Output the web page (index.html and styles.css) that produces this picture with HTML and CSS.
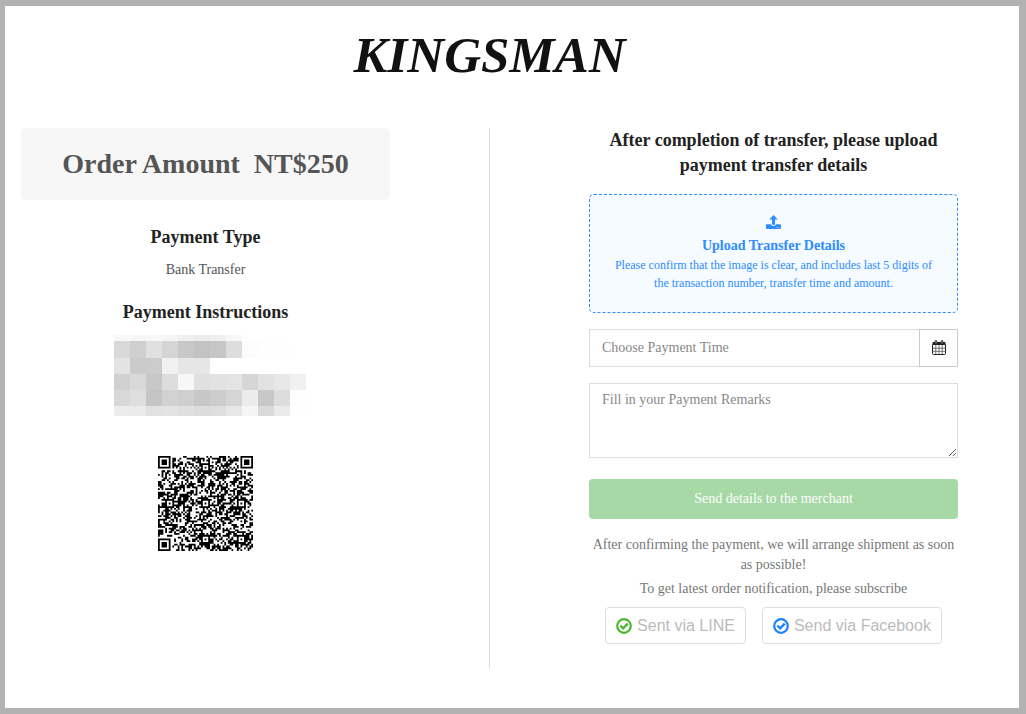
FILE: index.html
```html
<!DOCTYPE html>
<html lang="en">
<head>
    <meta charset="UTF-8">
    <meta name="viewport" content="width=device-width, initial-scale=1.0">
    <title>Kingsman - Payment</title>
    <link rel="stylesheet" href="styles.css">
</head>
<body>
    <div class="page">
        <header class="logo">KINGSMAN</header>

        <main class="columns">
            <section class="order">
                <h1 class="amount">Order Amount&nbsp; NT$250</h1>
                <h2 class="title">Payment Type</h2>
                <p class="type">Bank Transfer</p>
                <h2 class="title">Payment Instructions</h2>
                <svg class="mosaic" id="mosaic" viewBox="0 0 192 81" shape-rendering="crispEdges" aria-hidden="true"></svg>
                <svg class="qr" id="qr" viewBox="0 0 53 53" role="img" aria-label="QR code"></svg>
            </section>

            <div class="divider"></div>

            <form class="transfer">
                <h2 class="title">After completion of transfer, please upload payment transfer details</h2>

                <button type="button" class="upload">
                    <svg class="upload-icon" viewBox="0 0 15 15" aria-hidden="true">
                        <path fill="currentColor" d="M7.5 0 L11.8 4.6 H9 V9.2 Q9 9.8 8.4 9.8 H6.6 Q6 9.8 6 9.2 V4.6 H3.2 Z"/>
                        <path fill="currentColor" fill-rule="evenodd" d="M1 9.3 H4.9 Q5.2 11 7.5 11 Q9.8 11 10.1 9.3 H14 Q15 9.3 15 10.3 V13 Q15 14 14 14 H1 Q0 14 0 13 V10.3 Q0 9.3 1 9.3 Z M10.4 11.9 V12.8 H11.3 V11.9 Z M12.6 11.9 V12.8 H13.5 V11.9 Z"/>
                    </svg>
                    <strong class="upload-title">Upload Transfer Details</strong>
                    <span class="upload-hint">Please confirm that the image is clear, and includes last 5 digits of the transaction number, transfer time and amount.</span>
                </button>

                <div class="time">
                    <input type="text" class="field" placeholder="Choose Payment Time" aria-label="Payment time">
                    <button type="button" class="calendar" aria-label="Open calendar">
                        <svg viewBox="0 0 14 15" aria-hidden="true">
                            <path fill="currentColor" d="M1.5 2 H12.5 Q13.5 2 13.5 3 V5 H0.5 V3 Q0.5 2 1.5 2 Z"/>
                            <path fill="none" stroke="currentColor" d="M0.5 4.5 V13.5 Q0.5 14.5 1.5 14.5 H12.5 Q13.5 14.5 13.5 13.5 V4.5"/>
                            <path fill="none" stroke="currentColor" stroke-width="0.6" d="M3.8 5 V14.5 M7 5 V14.5 M10.2 5 V14.5 M0.5 8.2 H13.5 M0.5 11.3 H13.5"/>
                            <path fill="none" stroke="currentColor" stroke-width="2.6" stroke-linecap="round" d="M4 1.5 V3 M10 1.5 V3"/>
                            <path fill="none" stroke="#fff" stroke-width="0.6" stroke-linecap="round" d="M4 1.4 V3.2 M10 1.4 V3.2"/>
                        </svg>
                    </button>
                </div>

                <textarea class="field remarks" placeholder="Fill in your Payment Remarks" aria-label="Payment remarks"></textarea>

                <button type="submit" class="send">Send details to the merchant</button>

                <p class="note">After confirming the payment, we will arrange shipment as soon as possible!</p>
                <p class="note">To get latest order notification, please subscribe</p>

                <div class="subscribe">
                    <button type="button" class="channel">
                        <svg class="line" viewBox="0 0 16 16" aria-hidden="true">
                            <circle cx="8" cy="8" r="6.8" fill="none" stroke="currentColor" stroke-width="2.2"/>
                            <path fill="none" stroke="currentColor" stroke-width="2.4" d="M4.4 7.6 L7.2 10.3 L11.7 5.7"/>
                        </svg>
                        Sent via LINE
                    </button>
                    <button type="button" class="channel">
                        <svg class="facebook" viewBox="0 0 16 16" aria-hidden="true">
                            <circle cx="8" cy="8" r="6.8" fill="none" stroke="currentColor" stroke-width="2.2"/>
                            <path fill="none" stroke="currentColor" stroke-width="2.4" d="M4.4 7.6 L7.2 10.3 L11.7 5.7"/>
                        </svg>
                        Send via Facebook
                    </button>
                </div>
            </form>
        </main>
    </div>
    <script src="script.js"></script>
</body>
</html>
```
FILE: styles.css
```css
* {
    box-sizing: border-box;
}

body {
    display: flex;
    min-height: 100vh;
    margin: 0;
    padding: 6px 7px 6px 5px;
    background-color: #b2b2b2;
    font-family: "Liberation Serif", "Times New Roman", serif;
    font-size: 14px;
    line-height: 20px;
    color: #555;
}

h1, h2, p {
    margin: 0;
}

button, input, textarea {
    font: inherit;
}

button {
    cursor: pointer;
}

.page {
    flex: 1;
    padding: 22px 61px 40px 16px;
    background-color: #fff;
}

.logo {
    margin-bottom: 46px;
    font-size: 51px;
    font-weight: bold;
    font-style: italic;
    line-height: 54px;
    text-align: center;
    color: #111;
}

.columns {
    display: grid;
    grid-template-columns: 1fr 1px 1fr;
    gap: 99px;
}

.divider {
    background-color: #ddd;
}

.title {
    font-size: 18px;
    line-height: 25px;
    color: #222;
}

.order {
    display: flex;
    flex-direction: column;
    align-items: center;
}

.amount {
    align-self: stretch;
    margin-bottom: 25px;
    padding: 16px;
    border-radius: 5px;
    background-color: #f7f7f7;
    font-size: 28px;
    line-height: 40px;
    text-align: center;
}

.type {
    margin: 10px 0 20px;
}

.mosaic {
    width: 192px;
    margin: 10px 0 40px 8px;
}

.qr {
    width: 95px;
}

.transfer {
    display: flex;
    flex-direction: column;
    padding-bottom: 24px;
    text-align: center;
}

.upload {
    display: flex;
    flex-direction: column;
    align-items: center;
    margin: 16px 0;
    padding: 20px 24px;
    border: 1px dashed #2d8cff;
    border-radius: 5px;
    background-color: #f6fbff;
    color: #2d8cff;
}

.upload-icon {
    width: 15px;
    margin-bottom: 6px;
}

.upload-title {
    font-size: 14px;
}

.upload-hint {
    font-size: 12px;
    line-height: 18px;
}

.time {
    display: flex;
    margin-bottom: 16px;
}

.field {
    flex: 1;
    min-width: 0;
    height: 38px;
    padding: 6px 12px;
    border: 1px solid #ddd;
    border-radius: 0;
    background-color: #fff;
    color: #555;
}

.field::placeholder {
    color: #888;
}

.calendar {
    display: flex;
    align-items: center;
    justify-content: center;
    width: 39px;
    margin-left: -1px;
    padding: 0 0 2px;
    border: 1px solid #ccc;
    background-color: #fff;
    color: #222;
}

.calendar svg {
    width: 14px;
}

.remarks {
    flex: none;
    height: 75px;
    margin-bottom: 21px;
}

.send {
    height: 40px;
    margin-bottom: 16px;
    border: 0;
    border-radius: 4px;
    background-color: #a6d9a6;
    color: #fff;
}

.note {
    margin-bottom: 4px;
    color: #777;
}

.subscribe {
    display: flex;
    justify-content: center;
    gap: 16px;
    margin-top: 4px;
}

.channel {
    display: flex;
    align-items: center;
    gap: 5px;
    height: 37px;
    padding: 0 10px;
    border: 1px solid #ddd;
    border-radius: 4px;
    background-color: #fff;
    font-family: "Liberation Sans", Arial, sans-serif;
    font-size: 16px;
    color: #bbb;
}

.channel svg {
    width: 16px;
}

.channel .line {
    color: #4db82e;
}

.channel .facebook {
    color: #1a82ff;
}
```
FILE: script.js
```javascript
// masked account details: [top, height, grey level of each 16px cell]
const bands = [
    [0, 6, 'f8 f6 f7 f4 ef ec ef f7'],
    [6, 17, 'd9 cf e0 d5 c8 c3 c6 dd fc fe fe'],
    [23, 16, 'e3 cb cc f1 e6 e6'],
    [39, 16, 'd1 d9 c8 dd f7 e0 e2 e4 d6 e2 e8 f0'],
    [55, 16, 'd8 de c5 d2 cf c7 cc d5 ec c8 dd fe'],
    [71, 10, 'ec eb e1 e3 df dc de e7 f5 da eb fe']
];

let cells = '';
bands.forEach(([top, height, levels]) => {
    levels.split(' ').forEach((level, i) => {
        cells += `<rect x="${i * 16}" y="${top}" width="16" height="${height}" fill="#${level.repeat(3)}"/>`;
    });
});
document.getElementById('mosaic').innerHTML = cells;

// QR symbol, 53 x 53 modules
const size = 53;
const finders = [[3, 3], [49, 3], [3, 49]];
const aligns = [[26, 6], [6, 26], [26, 26], [46, 26], [26, 46], [46, 46]];
let seed = 250;

function random() {
    seed = (seed * 16807) % 2147483647;
    return seed / 2147483647;
}

function isDark(x, y) {
    const noise = random() < 0.53;
    for (const [cx, cy] of finders) {
        const d = Math.max(Math.abs(x - cx), Math.abs(y - cy));
        if (d <= 4) return d !== 2 && d !== 4;
    }
    for (const [cx, cy] of aligns) {
        const d = Math.max(Math.abs(x - cx), Math.abs(y - cy));
        if (d <= 2) return d !== 1;
    }
    if (x === 6 || y === 6) return (x + y) % 2 === 0;
    return noise;
}

let path = '';
for (let y = 0; y < size; y++) {
    for (let x = 0; x < size; x++) {
        if (isDark(x, y)) path += `M${x} ${y}h1v1h-1z`;
    }
}
document.getElementById('qr').innerHTML = `<path d="${path}"/>`;
```
